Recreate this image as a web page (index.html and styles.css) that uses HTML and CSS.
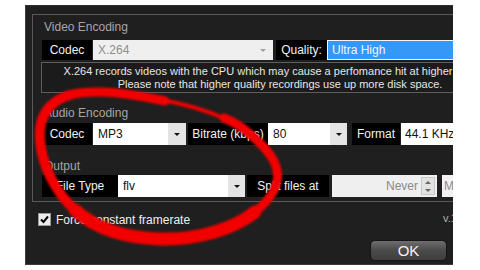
FILE: index.html
```html
<!DOCTYPE html>
<html>
<head>
<meta charset="utf-8">
<link rel="stylesheet" href="styles.css">
</head>
<body>
<div class="stage">
  <div class="dialog">
    <div class="group">
      <div class="heading">Video Encoding</div>
      <div class="row row-video">
        <div class="label lb-codec">Codec</div>
        <div class="combo disabled cb-x264"><span class="val">X.264</span><span class="drop"><i class="arrow"></i></span></div>
        <div class="label lb-quality">Quality:</div>
        <div class="field selected fd-quality">Ultra High</div>
      </div>
      <div class="info">
        <p>X.264 records videos with the CPU which may cause a perfomance hit at higher settings.</p>
        <p>Please note that higher quality recordings use up more disk space.</p>
      </div>

      <div class="heading heading-audio">Audio Encoding</div>
      <div class="row row-tall row-audio">
        <div class="label lb-codec">Codec</div>
        <div class="combo cb-mp3"><span class="val">MP3</span><span class="drop"><i class="arrow"></i></span></div>
        <div class="label lb-bitrate">Bitrate (kbps)</div>
        <div class="combo cb-80"><span class="val">80</span><span class="drop"><i class="arrow"></i></span></div>
        <div class="label lb-format">Format</div>
        <div class="field fd-format">44.1 KHz</div>
      </div>

      <div class="heading heading-output">Output</div>
      <div class="row row-tall row-output">
        <div class="label lb-filetype">File Type</div>
        <div class="combo cb-flv"><span class="val">flv</span><span class="drop"><i class="arrow"></i></span></div>
        <div class="label lb-split">Split files at</div>
        <div class="spinner"><span class="val">Never</span><span class="spin"><i class="up"></i><i class="down"></i></span></div>
        <div class="field disabled fd-unit">MB</div>
      </div>
    </div>

    <div class="footer">
      <label class="check">
        <span class="box"><svg width="11" height="11" viewBox="0 0 11 11"><path d="M2 5.5 L4.5 8 L9 2.5" fill="none" stroke="#000" stroke-width="2"/></svg></span>
        <span class="check-text">Force constant framerate</span>
      </label>
      <span class="version">v.1.0.2</span>
    </div>

    <div class="buttons">
      <button class="ok">OK</button>
    </div>
  </div>

  <svg class="scribble" width="480" height="270" viewBox="0 0 480 270">
    <defs>
      <filter id="soft" x="-10%" y="-10%" width="120%" height="120%">
        <feGaussianBlur stdDeviation="1.1"/>
      </filter>
    </defs>
    <g fill="none" stroke="#f20000" stroke-linecap="round" filter="url(#soft)">
      <path d="M226 119 C205 110 185 104 162 100" stroke-width="4"/>
      <path d="M165 101 C132 94 98 88 68 95" stroke-width="9"/>
      <path d="M70 95 C48 101 38 118 40 140 C42 165 55 192 75 210" stroke-width="10"/>
      <path d="M75 210 C95 228 125 238 160 239 C200 240 235 228 255 212" stroke-width="13"/>
      <path d="M255 212 C270 200 280 185 277 170 C274 155 260 143 250 134 C242 127 234 122 224 118" stroke-width="9"/>
    </g>
  </svg>
</div>
</body>
</html>
```

FILE: styles.css
```css
html, body {
  margin: 0;
  padding: 0;
}
body {
  background: #ffffff;
  width: 480px;
  height: 270px;
  overflow: hidden;
  font-family: "Liberation Sans", Arial, sans-serif;
  font-size: 12px;
}
.stage {
  position: relative;
  width: 480px;
  height: 270px;
  padding: 5px 0 0 25px;
  box-sizing: border-box;
}
.dialog {
  width: 428px;
  height: 260px;
  background: #1f1f1f;
  border-left: 1px solid #3c3c3c;
  border-top: 1px solid #2c2c2c;
  border-bottom: 1px solid #3a3a3a;
  box-sizing: border-box;
  padding: 8px 0 0 6px;
  overflow: hidden;
}
.group {
  width: 500px;
  border: 1px solid #5a5a5a;
  padding: 5px 0 4px 9px;
  box-sizing: border-box;
}
.heading {
  height: 14px;
  line-height: 14px;
  padding-left: 2px;
  color: #a6a6a6;
  font-size: 12px;
}
.heading-audio { margin-top: 13px; }
.heading-output { margin-top: 14px; }

.row {
  display: flex;
  height: 20px;
  margin-top: 6px;
}
.row-tall { height: 22px; }
.row-audio { margin-top: 3px; }
.row-output { margin-top: 2px; }

.label {
  flex: none;
  background: #000;
  color: #f2f2f2;
  text-align: center;
  white-space: nowrap;
  line-height: 20px;
}
.row-tall .label { line-height: 22px; }

.combo, .field, .spinner {
  flex: none;
  display: flex;
  align-items: center;
  background: #fff;
  color: #111;
  white-space: nowrap;
  box-sizing: border-box;
}
.combo .val { flex: 1; padding-left: 5px; }
.combo .drop {
  flex: none;
  width: 17px;
  height: 100%;
  background: #e4e4e4;
  display: flex;
  align-items: center;
  justify-content: center;
}
.arrow {
  width: 0;
  height: 0;
  border-left: 3px solid transparent;
  border-right: 3px solid transparent;
  border-top: 3px solid #111;
}
.combo.disabled { background: #efefef; color: #8e8e8e; }
.combo.disabled .drop { background: #efefef; }
.combo.disabled .arrow { border-top-color: #a0a0a0; }

.field { padding-left: 4px; }
.field.selected {
  background: #3598f6;
  color: #eef6ff;
  border: 1px solid #f4f4f4;
}
.field.disabled { background: #f2f2f2; color: #8a8a8a; padding-left: 2px; }

/* video row */
.lb-codec { width: 50px; }
.cb-x264 { width: 180px; margin-left: 1px; }
.cb-x264 .drop { width: 20px; }
.lb-quality { width: 51px; margin-left: 3px; }
.fd-quality { width: 140px; }

/* audio row */
.cb-mp3 { width: 93px; margin-left: 1px; }
.cb-mp3 .drop { width: 18px; }
.lb-bitrate { width: 80px; margin-left: 2px; }
.cb-80 { width: 79px; }
.lb-format { width: 48px; margin-left: 5px; }
.fd-format { width: 80px; margin-left: 1px; }

/* output row */
.lb-filetype { width: 76px; }
.cb-flv { width: 127px; }
.lb-split { width: 82px; margin-left: 2px; }
.spinner {
  width: 105px;
  margin-left: 3px;
  background: #efefef;
  color: #8a8a8a;
}
.spinner .val { flex: 1; text-align: right; padding-right: 3px; }
.spin {
  flex: none;
  width: 14px;
  height: 18px;
  margin-right: 2px;
  background: #e2e2e2;
  border: 1px solid #c8c8c8;
  box-sizing: border-box;
  display: flex;
  flex-direction: column;
  align-items: center;
  justify-content: space-around;
}
.spin .up, .spin .down {
  width: 0;
  height: 0;
  border-left: 3px solid transparent;
  border-right: 3px solid transparent;
}
.spin .up { border-bottom: 3px solid #666; }
.spin .down { border-top: 3px solid #666; }
.fd-unit { width: 60px; margin-left: 5px; }

.info {
  margin: 2px 0 0 -1px;
  width: 478px;
  height: 31px;
  box-sizing: border-box;
  border: 1px solid #5e5e5e;
  background: #1b1b1b;
  padding-top: 2px;
  color: #e6e6e6;
  font-size: 11px;
  line-height: 13px;
  text-align: center;
}
.info p { margin: 0; white-space: nowrap; }

.footer {
  display: flex;
  align-items: center;
  height: 13px;
  margin-top: 11px;
  padding-left: 6px;
}
.check {
  display: flex;
  align-items: center;
  color: #f0f0f0;
  font-size: 12px;
}
.box {
  width: 13px;
  height: 13px;
  box-sizing: border-box;
  background: #ececec;
  border: 1px solid #9a9a9a;
  display: flex;
  align-items: center;
  justify-content: center;
}
.box svg { display: block; }
.check-text { margin-left: 5px; }
.version {
  margin-left: auto;
  width: 10px;
  white-space: nowrap;
  color: #b0b0b0;
  font-size: 11px;
  position: relative;
  top: -2px;
}

.buttons {
  display: flex;
  justify-content: flex-end;
  margin-top: 14px;
  padding-right: 6px;
}
.ok {
  width: 77px;
  height: 21px;
  border: 1px solid #151515;
  border-radius: 5px;
  background: linear-gradient(#6e6e6e, #4a4a4a 50%, #3e3e3e);
  color: #f2f2f2;
  font-family: "Liberation Sans", Arial, sans-serif;
  font-size: 15px;
  line-height: 19px;
  padding: 0;
}

.scribble {
  position: absolute;
  left: 0;
  top: 0;
  pointer-events: none;
}
```
